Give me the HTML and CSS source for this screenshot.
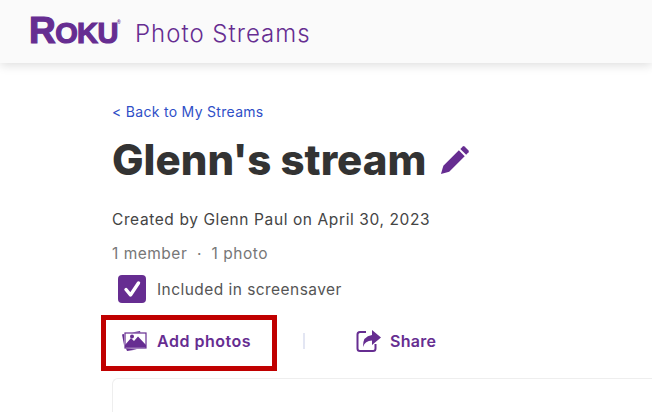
FILE: index.html
```html
<!DOCTYPE html>
<html lang="en">
<head>
    <meta charset="UTF-8">
    <title>Photo Streams</title>
    <link rel="stylesheet" href="styles.css">
</head>
<body>
    <header class="top-header">
        <span class="logo"><span class="logo-r">R</span>oku<span class="logo-mark">®</span></span>
        <span class="app-title">Photo Streams</span>
    </header>

    <main class="content">
        <a class="back-link" href="#">&lt; Back to My Streams</a>

        <div class="title-row">
            <h1>Glenn's stream</h1>
            <svg class="edit-icon" viewBox="0 0 32 32" width="31" height="31">
                <path d="M2 30 L4.5 21.5 L20.5 5.5 L26.5 11.5 L10.5 27.5 Z" fill="#662d91"/>
                <path d="M22 4 L24.6 1.5 Q25.5 .8 26.4 1.5 L30.5 5.6 Q31.2 6.5 30.5 7.4 L28 10 Z" fill="#662d91"/>
            </svg>
        </div>

        <p class="created">Created by Glenn Paul on April 30, 2023</p>
        <p class="counts">1 member &nbsp;·&nbsp; 1 photo</p>

        <div class="screensaver">
            <span class="checkbox">
                <svg viewBox="0 0 28 28" width="28" height="28">
                    <path d="M8 14.5 L12.5 20 L20.5 8" fill="none" stroke="#fff" stroke-width="3.4" stroke-linecap="round" stroke-linejoin="round"/>
                </svg>
            </span>
            <span>Included in screensaver</span>
        </div>

        <div class="actions">
            <button class="action action-add">
                <svg viewBox="0 0 26 22" width="26" height="22">
                    <path d="M3 4 L1 4.5 L3 15 Z" fill="#662d91"/>
                    <path d="M5 18.5 L6 21 L16 19.5 Z" fill="#662d91"/>
                    <path d="M11 2.5 L19 1 L19.5 2.5 Z" fill="#662d91"/>
                    <rect x="4" y="3" width="21" height="15" fill="#fff" stroke="#662d91" stroke-width="1.2"/>
                    <path d="M4 17.5 L4 15 L10 8 L13 11 L17 6.5 L25 15 L25 17.5 Z" fill="#662d91"/>
                    <circle cx="11" cy="6.5" r="2" fill="#662d91"/>
                </svg>
                <span>Add photos</span>
            </button>
            <span class="divider"></span>
            <button class="action action-share">
                <svg viewBox="0 0 26 24" width="26" height="24">
                    <path d="M10 3 H4 Q1.5 3 1.5 5.5 V19.5 Q1.5 22 4 22 H17 Q19.5 22 19.5 19.5 V15" fill="none" stroke="#662d91" stroke-width="2"/>
                    <path d="M16 1 L25 8.5 L16 16 V11.5 Q9 11.5 7 18 Q6.5 7 16 6 Z" fill="#662d91"/>
                </svg>
                <span>Share</span>
            </button>
        </div>

        <div class="card"></div>
    </main>
</body>
</html>
```

FILE: styles.css
```css
html, body {
    height: 100%;
}
body {
    font-family: 'Inter', 'Liberation Sans', sans-serif;
    background-color: #fff;
    margin: 0;
    color: #333;
    overflow: hidden;
}
.top-header {
    display: flex;
    align-items: center;
    height: 63px;
    padding-left: 29px;
    background-color: #fafafa;
    box-shadow: 0 2px 10px rgba(0,0,0,0.14);
}
.logo {
    position: relative;
    width: 106px;
    margin-top: -2px;
    font-family: 'Liberation Sans', sans-serif;
    font-size: 29px;
    font-weight: bold;
    letter-spacing: -0.6px;
    text-transform: uppercase;
    color: #662d91;
    -webkit-text-stroke: 1.2px #662d91;
}
.logo-r {
    font-size: 37px;
}
.logo-mark {
    position: absolute;
    top: 9px;
    left: 88px;
    font-size: 5px;
    letter-spacing: 0;
    -webkit-text-stroke: 0;
}
.app-title {
    padding-top: 4px;
    font-size: 24px;
    font-weight: 300;
    letter-spacing: 1px;
    color: #662d91;
}
.content {
    padding: 40px 0 0 112px;
}
.back-link {
    display: block;
    font-size: 14px;
    line-height: 18px;
    letter-spacing: 0.3px;
    color: #2f4fc7;
    text-decoration: none;
}
.title-row {
    display: flex;
    align-items: center;
    gap: 13px;
    margin-top: 14px;
}
h1 {
    margin: 0;
    font-size: 42px;
    line-height: 50px;
    font-weight: 800;
    color: #333;
}
.edit-icon {
    flex: none;
}
.created {
    margin: 25px 0 0;
    font-size: 15.5px;
    line-height: 20px;
    letter-spacing: 0.6px;
    color: #444;
}
.counts {
    margin: 14px 0 0;
    font-size: 15.5px;
    line-height: 20px;
    letter-spacing: 0.5px;
    color: #777;
}
.screensaver {
    display: flex;
    align-items: center;
    gap: 11px;
    margin: 11px 0 0 6px;
    font-size: 15.5px;
    letter-spacing: 0.45px;
    color: #555;
}
.checkbox {
    display: flex;
    width: 28px;
    height: 28px;
    border-radius: 4px;
    background-color: #662d91;
}
.actions {
    display: flex;
    align-items: center;
    margin: 12px 0 0 -11px;
}
.action {
    display: flex;
    align-items: center;
    border: none;
    background: none;
    padding: 0;
    font-family: inherit;
    font-size: 16px;
    font-weight: 600;
    letter-spacing: 0.5px;
    color: #662d91;
}
.action-add {
    gap: 10px;
    width: 176px;
    height: 56px;
    padding: 0 0 5px 15px;
    border: 5px solid #c00000;
    box-sizing: border-box;
}
.divider {
    width: 2px;
    height: 16px;
    margin-left: 26px;
    margin-bottom: 5px;
    background-color: #e3e6f3;
}
.action-share {
    gap: 8px;
    margin-left: 51px;
    padding-bottom: 5px;
    letter-spacing: 0.3px;
}
.card {
    height: 33px;
    margin-top: 7px;
    border: 1px solid #eee;
    border-bottom: none;
    border-right: none;
    border-radius: 6px 0 0 0;
}
```
